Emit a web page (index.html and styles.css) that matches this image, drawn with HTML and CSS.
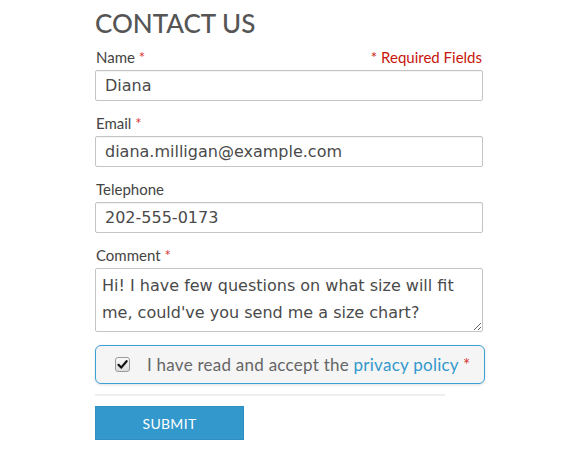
FILE: index.html
```html
<!DOCTYPE html>
<html>
<head>
<meta charset="utf-8">
<link rel="stylesheet" href="styles.css">
</head>
<body>
<div class="form">
  <h1 class="title">CONTACT US</h1>
  <div class="label-row">
    <label class="label">Name <span class="req">*</span></label>
    <span class="required-note">* Required Fields</span>
  </div>
  <input class="field" type="text" value="Diana">
  <label class="label">Email <span class="req">*</span></label>
  <input class="field" type="text" value="diana.milligan@example.com">
  <label class="label">Telephone</label>
  <input class="field" type="text" value="202-555-0173">
  <label class="label">Comment <span class="req">*</span></label>
  <textarea class="area">Hi! I have few questions on what size will fit me, could've you send me a size chart?</textarea>
  <div class="consent">
    <span class="check"><svg width="11" height="11" viewBox="0 0 11 11"><path d="M1.5 5.8 L4.2 8.6 L9.6 2.2" fill="none" stroke="#111" stroke-width="2.2" stroke-linecap="round" stroke-linejoin="round"/></svg></span>
    <span class="consent-text">I have read and accept the <a class="link" href="#">privacy policy</a> <span class="req">*</span></span>
  </div>
  <div class="divider"></div>
  <button class="submit">SUBMIT</button>
</div>
</body>
</html>
```
FILE: styles.css
```css
body {
  margin: 0;
  background: #fff;
  font-family: Lato, "Open Sans", sans-serif;
  color: #555;
}
.form {
  margin-left: 95px;
  width: 388px;
  display: flex;
  flex-direction: column;
}
.title {
  margin: 8px 0 0 0;
  font-size: 26px;
  font-weight: 500;
  line-height: 30px;
  color: #555;
}
.label-row {
  display: flex;
  justify-content: space-between;
  align-items: baseline;
}
.label {
  display: block;
  font-size: 15px;
  line-height: 18px;
  color: #444;
  margin: 13px 0 4px 1px;
}
.label-row .label { margin-top: 10px; }
.req { color: #d33; }
.required-note {
  font-size: 15px;
  color: #c7160b;
  margin-right: 1px;
}
.field {
  box-sizing: border-box;
  height: 31px;
  width: 388px;
  margin: 0;
  border: 1px solid #c4c4c4;
  border-radius: 2px;
  padding: 0 9px;
  font-family: "DejaVu Sans", Verdana, sans-serif;
  font-size: 16px;
  color: #4a4a4a;
  box-shadow: inset 0 1px 1px rgba(0,0,0,0.05);
}
.area {
  box-sizing: border-box;
  height: 64px;
  width: 388px;
  margin: 0;
  border: 1px solid #c4c4c4;
  border-radius: 2px;
  padding: 3px 6px;
  font-family: "DejaVu Sans", Verdana, sans-serif;
  font-size: 16px;
  line-height: 27px;
  color: #4a4a4a;
  resize: vertical;
}
.consent {
  box-sizing: border-box;
  margin-top: 13px;
  width: 390px;
  height: 39px;
  border: 1px solid #3ba0d6;
  border-radius: 6px;
  background: #f5f5f5;
  display: flex;
  align-items: center;
  padding-left: 19px;
  box-shadow: 0 1px 3px rgba(0,0,0,0.12);
}
.check {
  box-sizing: border-box;
  width: 15px;
  height: 15px;
  margin-right: 17px;
  border: 1px solid #9a9a9a;
  border-radius: 3px;
  background: linear-gradient(#fafafa, #dcdcdc);
  display: flex;
  align-items: center;
  justify-content: center;
}
.consent-text {
  font-size: 17px;
  letter-spacing: 0.25px;
  color: #666;
}
.link {
  color: #3399cc;
  text-decoration: none;
}
.divider {
  margin-top: 10px;
  width: 350px;
  height: 2px;
  background: #eee;
}
.submit {
  margin-top: 10px;
  width: 149px;
  height: 34px;
  background: #3399cc;
  border: 1px solid #2f8fc0;
  color: #fff;
  font-family: Lato, "Open Sans", sans-serif;
  font-size: 14px;
  letter-spacing: 0.3px;
  padding: 0;
}
```
